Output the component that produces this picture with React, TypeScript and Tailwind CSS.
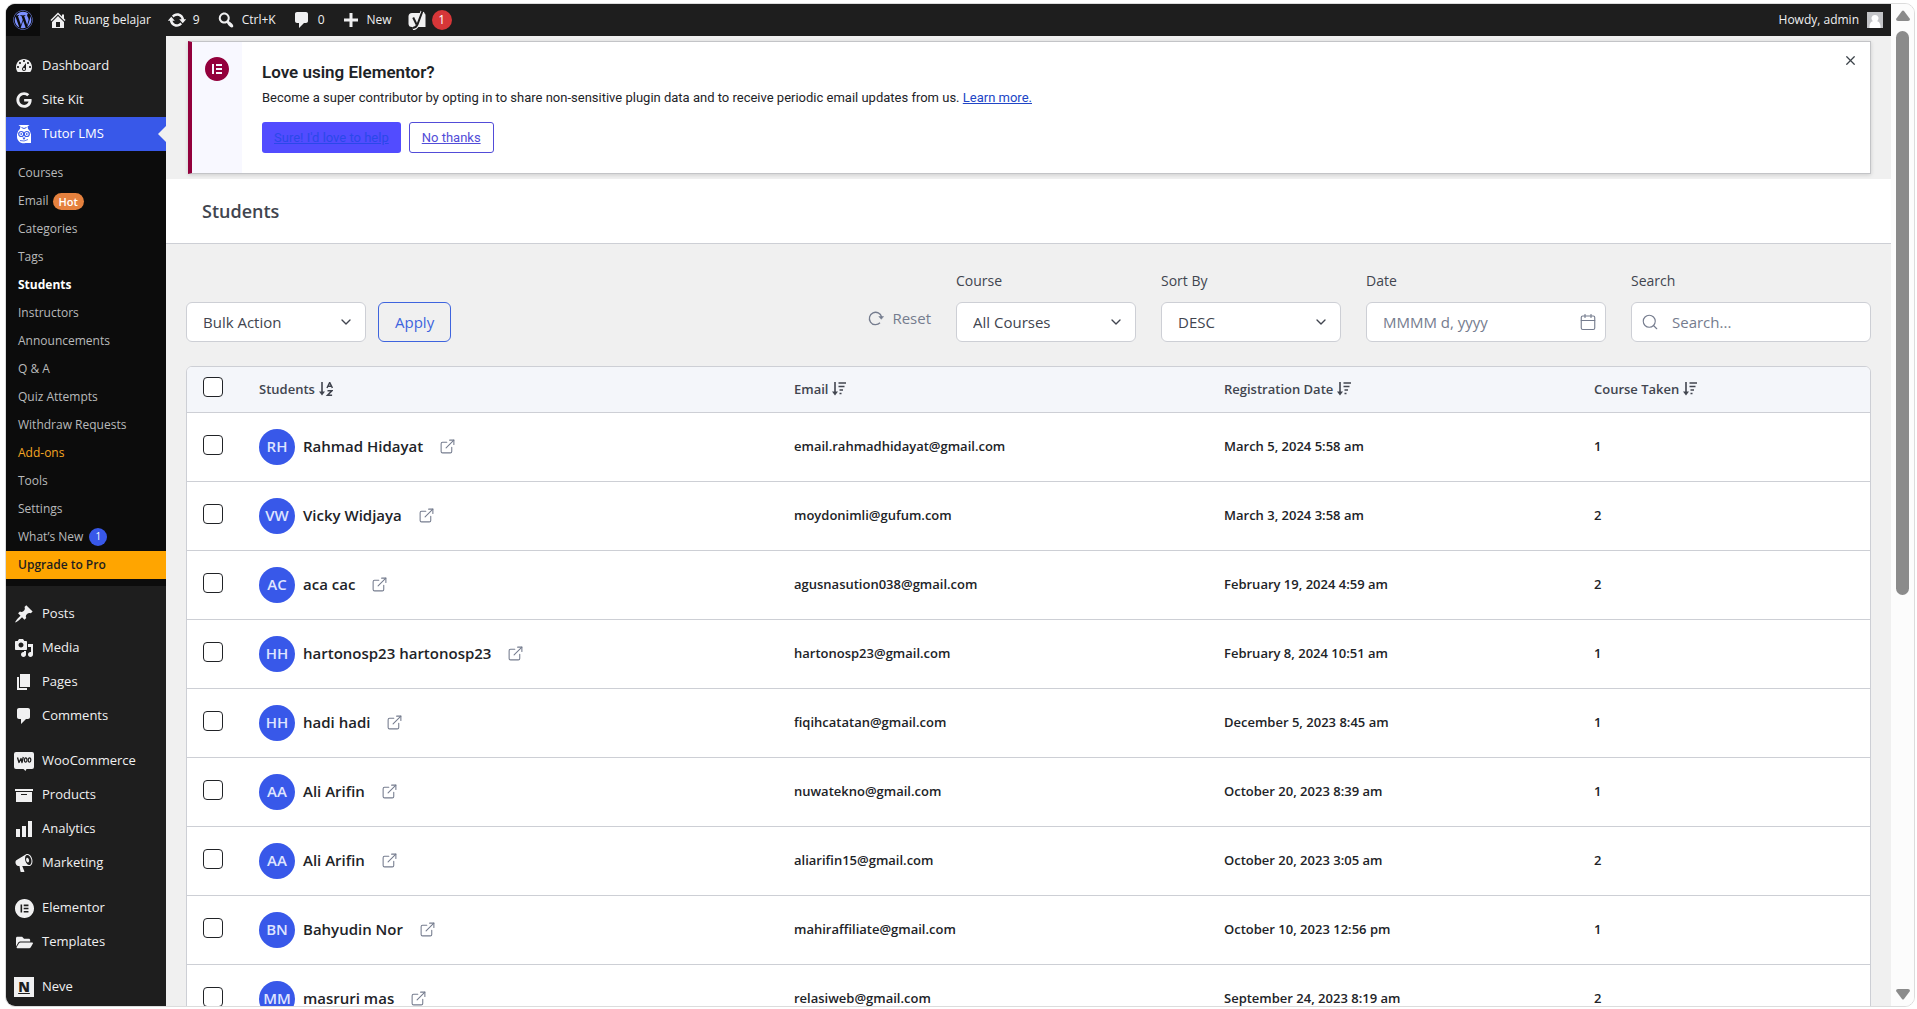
import { useState, type ReactNode } from 'react';
import { FaFolderOpen, FaGoogle, FaWordpress } from 'react-icons/fa';
import { SiElementor } from 'react-icons/si';
import { Calendar, ChevronDown, ExternalLink, Search, X } from 'lucide-react';

interface Student {
  initials: string;
  name: string;
  email: string;
  date: string;
  courses: number;
}

const STUDENTS: Student[] = [
  { initials: 'RH', name: 'Rahmad Hidayat', email: 'email.rahmadhidayat@gmail.com', date: 'March 5, 2024 5:58 am', courses: 1 },
  { initials: 'VW', name: 'Vicky Widjaya', email: 'moydonimli@gufum.com', date: 'March 3, 2024 3:58 am', courses: 2 },
  { initials: 'AC', name: 'aca cac', email: 'agusnasution038@gmail.com', date: 'February 19, 2024 4:59 am', courses: 2 },
  { initials: 'HH', name: 'hartonosp23 hartonosp23', email: 'hartonosp23@gmail.com', date: 'February 8, 2024 10:51 am', courses: 1 },
  { initials: 'HH', name: 'hadi hadi', email: 'fiqihcatatan@gmail.com', date: 'December 5, 2023 8:45 am', courses: 1 },
  { initials: 'AA', name: 'Ali Arifin', email: 'nuwatekno@gmail.com', date: 'October 20, 2023 8:39 am', courses: 1 },
  { initials: 'AA', name: 'Ali Arifin', email: 'aliarifin15@gmail.com', date: 'October 20, 2023 3:05 am', courses: 2 },
  { initials: 'BN', name: 'Bahyudin Nor', email: 'mahiraffiliate@gmail.com', date: 'October 10, 2023 12:56 pm', courses: 1 },
  { initials: 'MM', name: 'masruri mas', email: 'relasiweb@gmail.com', date: 'September 24, 2023 8:19 am', courses: 2 },
];

const ICONS = {
  dashboard:
    'M3.76 16h12.48c1.09-1.37 1.76-3.11 1.76-5 0-4.42-3.58-8-8-8s-8 3.58-8 8c0 1.89.67 3.63 1.76 5zM10 4c.55 0 1 .45 1 1s-.45 1-1 1-1-.45-1-1 .45-1 1-1zM6 6c.55 0 1 .45 1 1s-.45 1-1 1-1-.45-1-1 .45-1 1-1zm8 0c.55 0 1 .45 1 1s-.45 1-1 1-1-.45-1-1 .45-1 1-1zm-5.37 5.55L12 7v6c0 1.1-.9 2-2 2s-2-.9-2-2c0-.57.24-1.08.63-1.45zM4 10c.55 0 1 .45 1 1s-.45 1-1 1-1-.45-1-1 .45-1 1-1zm12 0c.55 0 1 .45 1 1s-.45 1-1 1-1-.45-1-1 .45-1 1-1zm-5 3c0-.55-.45-1-1-1s-1 .45-1 1 .45 1 1 1 1-.45 1-1z',
  home: 'M16 8.5l1.53 1.53-1.06 1.06L10 4.6l-6.47 6.49-1.06-1.06L10 2.5l4 4v-2h2v4zm-6-2.46l6 5.99V18H4v-5.97zM12 17v-5H8v5h4z',
  update:
    'M10.2 3.28c3.53 0 6.43 2.61 6.92 6h2.08l-3.5 4-3.5-4h2.32c-.45-1.97-2.21-3.45-4.32-3.45-1.45 0-2.73.71-3.54 1.78L4.95 5.66C6.23 4.2 8.11 3.28 10.2 3.28zm-.4 13.44c-3.52 0-6.43-2.61-6.92-6H.8l3.5-4c1.17 1.33 2.33 2.67 3.5 4H5.48c.45 1.97 2.21 3.45 4.32 3.45 1.45 0 2.73-.71 3.54-1.78l1.71 1.95c-1.28 1.46-3.15 2.38-5.25 2.38z',
  search:
    'M12.14 4.18c1.87 1.87 2.11 4.75.72 6.89.12.1.22.21.36.31.2.16.47.36.81.59.34.24.56.39.66.47.42.31.73.57.94.78.32.32.6.65.84 1 .25.35.44.69.59 1.04.14.35.21.68.18 1-.02.32-.14.59-.36.81s-.49.34-.81.36c-.31.02-.65-.04-.99-.19-.35-.14-.7-.34-1.04-.59-.35-.24-.68-.52-1-.84-.21-.21-.47-.52-.77-.93-.1-.13-.25-.35-.47-.66-.22-.32-.4-.57-.56-.78-.16-.2-.29-.35-.44-.5-2.07 1.09-4.69.76-6.44-.98-2.14-2.15-2.14-5.64 0-7.78 2.15-2.15 5.63-2.15 7.78 0zm-1.41 6.36c1.36-1.37 1.36-3.58 0-4.95-1.37-1.37-3.59-1.37-4.95 0-1.37 1.37-1.37 3.58 0 4.95 1.36 1.37 3.58 1.37 4.95 0z',
  comments: 'M5 2h9c1.1 0 2 .9 2 2v7c0 1.1-.9 2-2 2h-2l-5 5v-5H5c-1.1 0-2-.9-2-2V4c0-1.1.9-2 2-2z',
  plus: 'M17 8.5v3h-5.5V17h-3v-5.5H3v-3h5.5V3h3v5.5H17z',
  post: 'M10.44 3.02l1.82-1.82 6.36 6.35-1.83 1.82c-1.05-.68-2.48-.57-3.41.36l-.75.75c-.92.93-1.04 2.35-.35 3.41l-1.83 1.82-2.41-2.41-2.8 2.79c-.42.42-3.38 2.71-3.8 2.29s1.86-3.39 2.28-3.81l2.79-2.79L4.1 9.36l1.83-1.82c1.05.69 2.48.57 3.4-.36l.75-.75c.93-.92 1.05-2.35.36-3.41z',
  media:
    'M13 11V4c0-.55-.45-1-1-1h-1.67L9 1H5L3.67 3H2c-.55 0-1 .45-1 1v7c0 .55.45 1 1 1h10c.55 0 1-.45 1-1zM7 4.5c1.38 0 2.5 1.12 2.5 2.5S8.38 9.5 7 9.5 4.5 8.38 4.5 7 5.62 4.5 7 4.5zM14 6h5v10.5c0 1.38-1.12 2.5-2.5 2.5S14 17.88 14 16.5s1.12-2.5 2.5-2.5c.17 0 .34.02.5.05V9h-3V6zm-4 8.05V13h2v3.5c0 1.38-1.12 2.5-2.5 2.5S7 17.88 7 16.5 8.12 14 9.5 14c.17 0 .34.02.5.05z',
  page: 'M6 15V2h10v13H6zm-1 1h8v2H3V5h2v11z',
  archive: 'M19 4v2H1V4h18zM2 7h16v10H2V7zm11 3V9H7v1h6z',
  chart: 'M18 18V2h-4v16h4zm-6 0V7H8v11h4zm-6 0v-8H2v8h4z',
  megaphone:
    'M18.15 5.94c.46 1.62.38 3.22-.02 4.48-.42 1.28-1.26 2.18-2.3 2.48-.16.06-.26.06-.4.06-.06.02-.12.02-.18.02-.06.02-.14.02-.22.02h-6.8l2.22 5.5c.02.14-.06.26-.14.34-.08.1-.24.16-.34.16H6.95c-.1 0-.26-.06-.34-.16-.08-.08-.16-.2-.14-.34l-1-5.5H4.25l-.02-.02c-.5.06-1.08-.18-1.54-.62s-.88-1.08-1.06-1.88c-.24-.8-.2-1.56-.02-2.2.18-.62.58-1.08 1.06-1.3l.02-.02 9-5.4c.1-.06.18-.1.24-.16.06-.04.14-.08.24-.12.16-.08.28-.12.5-.18 1.04-.3 2.24.1 3.22.98s1.84 2.24 2.26 3.86zm-2.58 5.98h-.02c.4-.1.74-.34 1.04-.7.58-.7.86-1.76.86-3.04 0-.64-.1-1.3-.28-1.98-.34-1.36-1.02-2.5-1.78-3.24s-1.68-1.1-2.46-.88c-.82.22-1.4.96-1.7 2-.32 1.04-.28 2.36.06 3.72.38 1.36 1 2.5 1.8 3.24.78.74 1.62 1.1 2.48.88zm-2.54-7.08c.22-.04.42-.02.62.04.38.16.76.48 1.02 1s.42 1.2.42 1.78c0 .3-.04.56-.12.8-.18.48-.44.84-.86.94-.34.1-.8-.06-1.14-.4s-.64-.86-.78-1.5c-.18-.62-.12-1.24.02-1.72s.48-.84.82-.94z',
};

function Icon({ name }: { name: keyof typeof ICONS }) {
  return (
    <svg viewBox="0 0 20 20" width="20" height="20" fill="currentColor" fillRule="evenodd" aria-hidden="true">
      <path d={ICONS[name]} />
    </svg>
  );
}

function OwlIcon() {
  return (
    <svg viewBox="0 0 20 20" width="20" height="20" aria-hidden="true">
      <path d="M4.500 1h11l-2 1.600.600 2.400a7 7 0 0 1 2.900 6V19h-5.500A6.500 6.500 0 0 1 3 12.500V11a7 7 0 0 1 2.900-6l.600-2.400z" fill="currentColor" />
      <path d="M7.500 3.500 10 4.500l2.500-1" stroke="#3858e9" strokeWidth="1" fill="none" />
      <circle cx="7.200" cy="10" r="2.500" fill="none" stroke="#3858e9" strokeWidth="1.200" />
      <circle cx="12.800" cy="10" r="2.500" fill="none" stroke="#3858e9" strokeWidth="1.200" />
      <path d="M7.200 9v2M12.800 9v2M9 13.500l1 1.500 1-1.500" stroke="#3858e9" strokeWidth="1.200" fill="none" />
      <path d="M6 16.500q4 1.500 8-1" stroke="#3858e9" strokeWidth=".8" fill="none" />
    </svg>
  );
}

function YoastIcon() {
  return (
    <svg viewBox="0 0 18 20" width="18" height="20" role="img" aria-label="Yoast SEO">
      <path d="M4 3h11.500Q17.500 3 17.500 5v12H4Q0.500 17 .5 13.500v-7Q.5 3 4 3z" fill="#f0f0f1" />
      <path d="M14.500 1.500 9.600 14.200Q8.300 18 4.800 18.300" fill="none" stroke="#f0f0f1" strokeWidth="4" />
      <path d="M14.500 1 9.600 14.200Q8.300 17.800 4.800 18" fill="none" stroke="#1e1e1e" strokeWidth="2" />
      <path d="M5.200 7.500 8.600 14.500" fill="none" stroke="#1e1e1e" strokeWidth="2" />
    </svg>
  );
}

function WooIcon() {
  return (
    <svg viewBox="0 0 20 20" width="20" height="20" aria-hidden="true">
      <path d="M2 1h16q2 0 2 2v13q0 2-2 2h-5.500l-1 2-2-2H2q-2 0-2-2V3q0-2 2-2z" fill="#f0f0f1" />
      <path d="M3.500 6.500 5 11.500 7 7.500 8 11.500 9.300 6" fill="none" stroke="#1e1e1e" strokeWidth="1.300" strokeLinejoin="round" />
      <ellipse cx="11.700" cy="9" rx="1.300" ry="2.200" fill="none" stroke="#1e1e1e" strokeWidth="1.200" />
      <ellipse cx="15.500" cy="9" rx="1.300" ry="2.200" fill="none" stroke="#1e1e1e" strokeWidth="1.200" />
    </svg>
  );
}

function NeveIcon() {
  return (
    <span className="flex h-5 w-5 items-center justify-center bg-[#f0f0f1] text-sm font-extrabold text-[#1e1e1e] underline">
      N
    </span>
  );
}

function SortIcon({ letters = false }: { letters?: boolean }) {
  return (
    <svg viewBox="0 0 14 14" width="14" height="14" aria-hidden="true">
      <path d="M3 0v11" stroke="currentColor" strokeWidth="1.600" />
      <path d="M0 9.500h6L3 13.500z" fill="currentColor" />
      {letters ? (
        <path
          d="M8 6 10.700.5 13.400 6M9 4.200h3.400M8.500 8.800h4.300l-4.300 4.400h4.600"
          fill="none"
          stroke="currentColor"
          strokeWidth="1.500"
        />
      ) : (
        <path d="M6.500 1H14M6.500 4.500H12.500M7.500 8H11M7.500 11.500H9.500" stroke="currentColor" strokeWidth="1.700" />
      )}
    </svg>
  );
}

function ResetIcon() {
  return (
    <svg viewBox="0 0 16 16" width="16" height="16" fill="none" stroke="currentColor" strokeWidth="1.300" aria-hidden="true">
      <path d="M12 12.800A6.200 6.200 0 1 1 13.600 7" />
      <path d="M10.800 6.500h4.800L13.300 9.300z" fill="currentColor" strokeWidth=".5" />
    </svg>
  );
}

function BarLink({ icon, children }: { icon: ReactNode; children: ReactNode }) {
  return (
    <a href="#" className="flex items-center gap-[6px] px-2">
      {icon}
      {children}
    </a>
  );
}

function AdminBar() {
  return (
    <header className="flex h-8 shrink-0 items-center justify-between bg-[#1e1e1e] text-xs text-[#f0f0f1]">
      <nav aria-label="Toolbar" className="flex h-full items-center">
        <a href="#" aria-label="About WordPress" className="flex h-full w-[34px] items-center justify-center bg-[#0c0c0c] text-[#7b90ff]">
          <FaWordpress size={20} />
        </a>
        <BarLink icon={<Icon name="home" />}>Ruang belajar</BarLink>
        <BarLink icon={<Icon name="update" />}>9</BarLink>
        <BarLink icon={<Icon name="search" />}>Ctrl+K</BarLink>
        <BarLink icon={<Icon name="comments" />}>0</BarLink>
        <BarLink icon={<Icon name="plus" />}>New</BarLink>
        <BarLink icon={<YoastIcon />}>
          <span className="flex h-5 w-5 items-center justify-center rounded-full bg-[#d63638] text-white">1</span>
        </BarLink>
      </nav>
      <a href="#" className="flex items-center gap-2 px-2">
        Howdy, admin
        <svg viewBox="0 0 16 16" width="16" height="16" aria-hidden="true">
          <path d="M0 0h16v16H0z" fill="#c3c4c7" />
          <path d="M8 3a3.500 3.500 0 0 1 2.200 6.300c2 .6 3 2 3.300 4.700V16h-11v-2c.3-2.700 1.300-4.100 3.300-4.700A3.500 3.500 0 0 1 8 3z" fill="#fff" />
        </svg>
      </a>
    </header>
  );
}

function MenuItem({ icon, label, active = false }: { icon: ReactNode; label: string; active?: boolean }) {
  return (
    <a
      href="#"
      className={
        active
          ? 'relative flex h-[34px] items-center gap-2 bg-[#3858e9] pl-2 text-[13px] text-white'
          : 'flex h-[34px] items-center gap-2 pl-2 text-[13px] text-[#f0f0f1]'
      }
    >
      <span className="flex w-5 justify-center">{icon}</span>
      {label}
      {active && (
        <span className="absolute right-0 border-y-8 border-r-8 border-y-transparent border-r-[#f0f0f0]" />
      )}
    </a>
  );
}

function SubItem({ children, className = 'text-[#b9babb]' }: { children: ReactNode; className?: string }) {
  return (
    <a href="#" className={`flex h-7 items-center px-3 ${className}`}>
      {children}
    </a>
  );
}

function Sidebar() {
  return (
    <nav aria-label="Main menu" className="w-40 shrink-0 overflow-hidden bg-[#1e1e1e] pt-[13px]">
      <MenuItem icon={<Icon name="dashboard" />} label="Dashboard" />
      <MenuItem icon={<FaGoogle size={16} />} label="Site Kit" />
      <MenuItem icon={<OwlIcon />} label="Tutor LMS" active />
      <div className="mb-[11px] bg-[#0c0c0c] pt-2 pb-[7px] text-xs">
        <SubItem>Courses</SubItem>
        <SubItem>
          Email
          <span className="ml-1 rounded-full bg-[#e5813e] px-[6px] text-[11px] leading-[17px] font-semibold text-white">Hot</span>
        </SubItem>
        <SubItem>Categories</SubItem>
        <SubItem>Tags</SubItem>
        <SubItem className="font-bold text-white">Students</SubItem>
        <SubItem>Instructors</SubItem>
        <SubItem>Announcements</SubItem>
        <SubItem>Q &amp; A</SubItem>
        <SubItem>Quiz Attempts</SubItem>
        <SubItem>Withdraw Requests</SubItem>
        <SubItem className="text-[#f5a623]">Add-ons</SubItem>
        <SubItem>Tools</SubItem>
        <SubItem>Settings</SubItem>
        <SubItem>
          What’s New
          <span className="ml-[6px] flex h-[18px] w-[18px] items-center justify-center rounded-full bg-[#3858e9] text-[10px] text-white">1</span>
        </SubItem>
        <SubItem className="bg-[#ffa500] font-semibold text-[#1e1e1e]">Upgrade to Pro</SubItem>
      </div>
      <div className="flex flex-col gap-[11px]">
        <div>
          <MenuItem icon={<Icon name="post" />} label="Posts" />
          <MenuItem icon={<Icon name="media" />} label="Media" />
          <MenuItem icon={<Icon name="page" />} label="Pages" />
          <MenuItem icon={<Icon name="comments" />} label="Comments" />
        </div>
        <div>
          <MenuItem icon={<WooIcon />} label="WooCommerce" />
          <MenuItem icon={<Icon name="archive" />} label="Products" />
          <MenuItem icon={<Icon name="chart" />} label="Analytics" />
          <MenuItem icon={<Icon name="megaphone" />} label="Marketing" />
        </div>
        <div>
          <MenuItem icon={<SiElementor size={19} />} label="Elementor" />
          <MenuItem icon={<FaFolderOpen size={17} />} label="Templates" />
        </div>
        <MenuItem icon={<NeveIcon />} label="Neve" />
      </div>
    </nav>
  );
}

function ElementorNotice() {
  return (
    <section className="mr-5 ml-[22px] flex border border-l-4 border-[#c3c4c7] border-l-[#93003c] bg-white font-[Roboto,sans-serif] text-[13px] text-[#1d2327] shadow-[0_1px_4px_rgba(0,0,0,0.15)]">
      <div className="w-[50px] bg-[#f8f8ff] pt-[15px]">
        <SiElementor size={24} className="mx-auto text-[#93003c]" />
      </div>
      <div className="flex-1 px-5 py-5">
        <h2 className="text-[17px] leading-5 font-semibold">Love using Elementor?</h2>
        <p className="mt-2 leading-4">
          Become a super contributor by opting in to share non-sensitive plugin data and to receive periodic email updates from us.{' '}
          <a href="#" className="text-[#2145c6] underline">Learn more.</a>
        </p>
        <div className="mt-4 flex gap-2">
          <a href="#" className="flex h-[31px] items-center rounded-[3px] bg-[#524cff] px-3 text-[#2a48ea] underline">Sure! I'd love to help</a>
          <a href="#" className="flex h-[31px] items-center rounded-[3px] border border-[#524cd8] px-3 text-[#524cd8] underline">No thanks</a>
        </div>
      </div>
      <button type="button" aria-label="Dismiss" className="self-start px-3 py-[11px] text-[#3c434a]">
        <X size={15} />
      </button>
    </section>
  );
}

function SelectBox({ id, label, option }: { id: string; label?: string; option: string }) {
  return (
    <div className="relative w-[180px]">
      <select
        id={id}
        aria-label={label}
        className="h-10 w-full appearance-none rounded-md border border-[#cdcfd5] bg-white px-4 text-[15px] text-[#41454f]"
      >
        <option>{option}</option>
      </select>
      <ChevronDown size={16} className="pointer-events-none absolute top-3 right-3 text-[#41454f]" />
    </div>
  );
}

function Field({ id, label, children }: { id: string; label: string; children: ReactNode }) {
  return (
    <div>
      <label htmlFor={id} className="mb-[11px] block text-sm leading-5 font-medium text-[#41454f]">
        {label}
      </label>
      {children}
    </div>
  );
}

function Filters() {
  return (
    <div className="flex items-end justify-between">
      <div className="flex gap-3">
        <SelectBox id="bulk" label="Bulk action" option="Bulk Action" />
        <button type="button" className="h-10 rounded-md border border-[#3e64de] px-4 text-[15px] text-[#3e64de]">
          Apply
        </button>
      </div>
      <div className="flex items-end gap-[25px]">
        <button type="button" className="mb-[13px] flex items-center gap-2 text-[15px] text-[#757c8e]">
          <ResetIcon />
          Reset
        </button>
        <Field id="course" label="Course">
          <SelectBox id="course" option="All Courses" />
        </Field>
        <Field id="sort" label="Sort By">
          <SelectBox id="sort" option="DESC" />
        </Field>
        <Field id="date" label="Date">
          <div className="relative w-[240px]">
            <input
              id="date"
              type="text"
              placeholder="MMMM d, yyyy"
              className="h-10 w-full rounded-md border border-[#cdcfd5] bg-white px-4 text-[15px] placeholder:text-[#757c8e]"
            />
            <Calendar size={18} strokeWidth={1.5} className="pointer-events-none absolute top-[11px] right-[9px] text-[#757c8e]" />
          </div>
        </Field>
        <Field id="search" label="Search">
          <div className="relative w-[240px]">
            <input
              id="search"
              type="search"
              placeholder="Search..."
              className="h-10 w-full rounded-md border border-[#cdcfd5] bg-white pr-4 pl-10 text-[15px] placeholder:text-[#757c8e]"
            />
            <Search size={18} strokeWidth={1.5} className="pointer-events-none absolute top-[11px] left-[10px] text-[#757c8e]" />
          </div>
        </Field>
      </div>
    </div>
  );
}

function Checkbox({ label, checked, onChange }: { label: string; checked: boolean; onChange: () => void }) {
  return (
    <input
      type="checkbox"
      aria-label={label}
      checked={checked}
      onChange={onChange}
      className="block h-5 w-5 appearance-none rounded border border-[#212327] bg-white checked:bg-[#3e64de]"
    />
  );
}

function HeadCell({ label, letters }: { label: string; letters?: boolean }) {
  return (
    <th scope="col" className="px-4 text-left font-semibold">
      <button type="button" className="flex items-center gap-1">
        {label}
        <SortIcon letters={letters} />
      </button>
    </th>
  );
}

function StudentsTable() {
  const [selected, setSelected] = useState<number[]>([]);
  const allSelected = selected.length === STUDENTS.length;

  const toggle = (i: number) =>
    setSelected((prev) => (prev.includes(i) ? prev.filter((n) => n !== i) : [...prev, i]));

  return (
    <div className="mt-6 overflow-hidden rounded-md border border-[#cdcfd5] bg-white">
      <table className="w-full table-fixed border-collapse text-[13px] font-semibold text-[#212327]">
        <colgroup>
          <col className="w-14" />
          <col />
          <col className="w-[430px]" />
          <col className="w-[370px]" />
          <col className="w-[292px]" />
        </colgroup>
        <thead>
          <tr className="h-[45px] border-b border-[#cdcfd5] bg-[#f4f6fa] text-[#41454f]">
            <th scope="col" className="pb-1 pl-4">
              <Checkbox
                label="Select all students"
                checked={allSelected}
                onChange={() => setSelected(allSelected ? [] : STUDENTS.map((_, i) => i))}
              />
            </th>
            <HeadCell label="Students" letters />
            <HeadCell label="Email" />
            <HeadCell label="Registration Date" />
            <HeadCell label="Course Taken" />
          </tr>
        </thead>
        <tbody>
          {STUDENTS.map((s, i) => (
            <tr key={s.email} className="h-[69px] border-b border-[#cdcfd5]">
              <td className="pb-1 pl-4">
                <Checkbox label={`Select ${s.name}`} checked={selected.includes(i)} onChange={() => toggle(i)} />
              </td>
              <td className="px-4">
                <div className="flex items-center text-[15px]">
                  <span className="mr-2 flex h-9 w-9 items-center justify-center rounded-full bg-[#3858e9] text-[#dfe4ff]">
                    {s.initials}
                  </span>
                  {s.name}
                  <a href="#" aria-label={`Open profile of ${s.name}`} className="ml-4 text-[#757c8e]">
                    <ExternalLink size={17} strokeWidth={1.5} />
                  </a>
                </div>
              </td>
              <td className="px-4">{s.email}</td>
              <td className="px-4">{s.date}</td>
              <td className="px-4">{s.courses}</td>
            </tr>
          ))}
        </tbody>
      </table>
    </div>
  );
}

function Scrollbar() {
  return (
    <div aria-hidden="true" className="flex w-[23px] shrink-0 flex-col items-center bg-[#fcfcfc] pt-[6px] pb-[6px] text-[#8b8b8b]">
      <svg viewBox="0 0 14 11" width="14" height="11" fill="currentColor">
        <path d="M6 1Q7 0 8 1l6 8q0 2-2 2H2q-2 0-2-2z" />
      </svg>
      <div className="mt-[10px] h-[57%] w-[13px] rounded-full bg-[#8b8b8b]" />
      <svg viewBox="0 0 14 11" width="14" height="11" fill="currentColor" className="mt-auto">
        <path d="M6 10q1 1 2 0l6-8q0-2-2-2H2Q0 0 0 2z" />
      </svg>
    </div>
  );
}

export default function App() {
  return (
    <div className="h-screen bg-white pt-[3px] pr-[2px] pb-[2px] pl-[5px] font-['Open_Sans',sans-serif]">
      <div className="flex h-full overflow-hidden rounded-[10px] border border-[#dcdcdc]">
        <div className="flex min-w-0 flex-1 flex-col">
          <AdminBar />
          <div className="flex min-h-0 flex-1">
            <Sidebar />
            <main className="min-w-0 flex-1 overflow-hidden bg-[#f0f0f0] pt-[5px]">
              <ElementorNotice />
              <div className="mt-[5px] flex h-[65px] items-center border-b border-[#cdcfd5] bg-white px-9">
                <h1 className="text-lg font-semibold text-[#41454f]">Students</h1>
              </div>
              <div className="px-5 pt-[27px]">
                <Filters />
                <StudentsTable />
              </div>
            </main>
          </div>
        </div>
        <Scrollbar />
      </div>
    </div>
  );
}
